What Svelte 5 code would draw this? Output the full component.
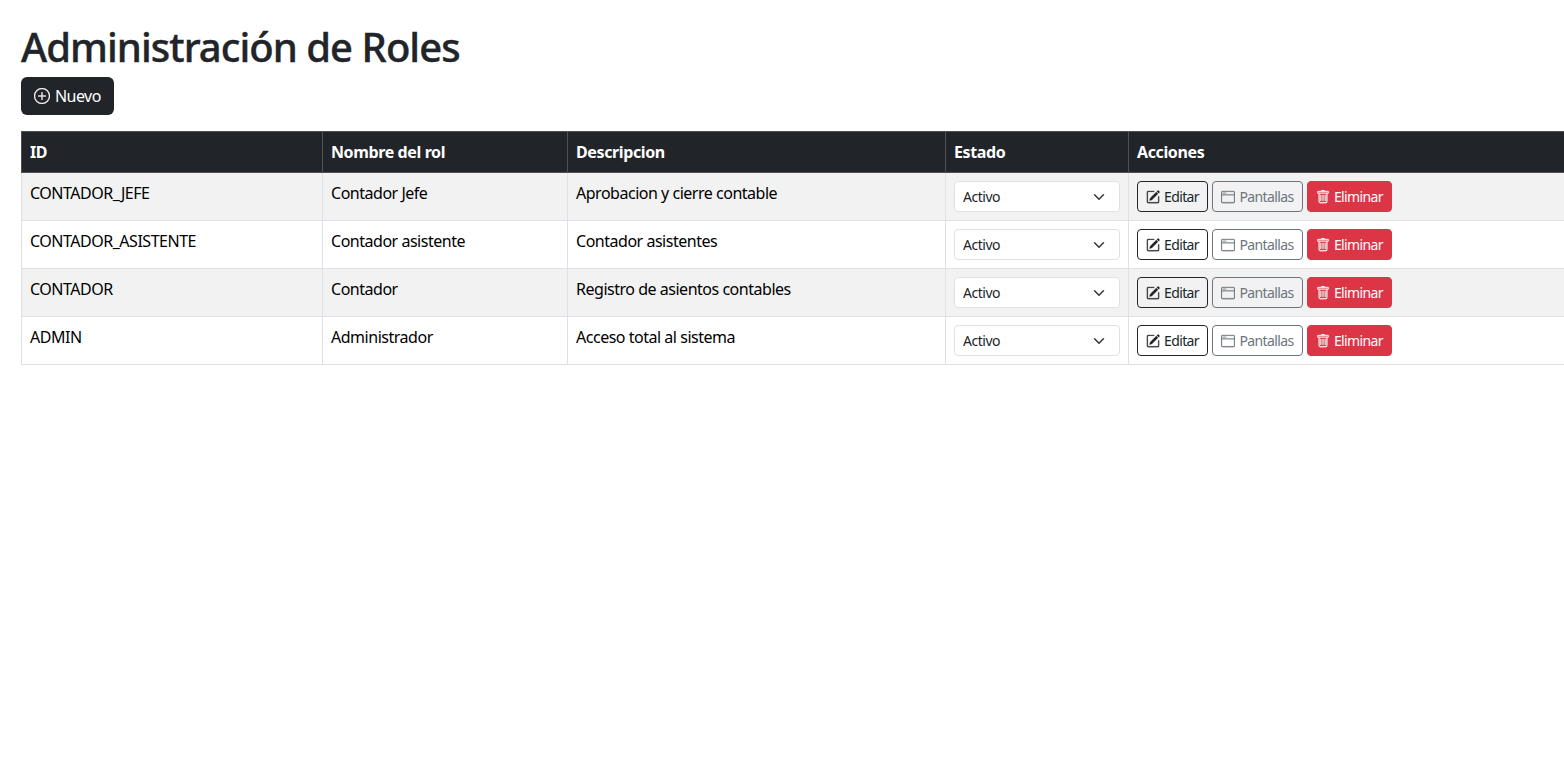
<script>
	const roles = [
		{ id: 'CONTADOR_JEFE', name: 'Contador Jefe', desc: 'Aprobacion y cierre contable' },
		{ id: 'CONTADOR_ASISTENTE', name: 'Contador asistente', desc: 'Contador asistentes' },
		{ id: 'CONTADOR', name: 'Contador', desc: 'Registro de asientos contables' },
		{ id: 'ADMIN', name: 'Administrador', desc: 'Acceso total al sistema' }
	];
</script>

<div class="page">
	<h1>Administración de Roles</h1>
	<button class="btn btn-new">
		<svg class="bi" width="16" height="16" viewBox="0 0 16 16" fill="currentColor">
			<path d="M8 15A7 7 0 1 1 8 1a7 7 0 0 1 0 14zm0 1A8 8 0 1 0 8 0a8 8 0 0 0 0 16z" />
			<path d="M8 4a.5.5 0 0 1 .5.5v3h3a.5.5 0 0 1 0 1h-3v3a.5.5 0 0 1-1 0v-3h-3a.5.5 0 0 1 0-1h3v-3A.5.5 0 0 1 8 4z" />
		</svg>
		Nuevo
	</button>

	<table>
		<colgroup>
			<col class="c1" />
			<col class="c2" />
			<col class="c3" />
			<col class="c4" />
			<col class="c5" />
		</colgroup>
		<thead>
			<tr>
				<th>ID</th>
				<th>Nombre del rol</th>
				<th>Descripcion</th>
				<th>Estado</th>
				<th>Acciones</th>
			</tr>
		</thead>
		<tbody>
			{#each roles as role}
				<tr>
					<td>{role.id}</td>
					<td>{role.name}</td>
					<td>{role.desc}</td>
					<td>
						<select>
							<option>Activo</option>
							<option>Inactivo</option>
						</select>
					</td>
					<td>
						<div class="actions">
							<button class="btn btn-sm btn-edit">
								<svg class="bi" width="14" height="14" viewBox="0 0 16 16" fill="currentColor">
									<path d="M15.502 1.94a.5.5 0 0 1 0 .706L14.459 3.69l-2-2L13.502.646a.5.5 0 0 1 .707 0l1.293 1.293zm-1.75 2.456-2-2L4.939 9.21a.5.5 0 0 0-.121.196l-.805 2.414a.25.25 0 0 0 .316.316l2.414-.805a.5.5 0 0 0 .196-.12l6.813-6.814z" />
									<path fill-rule="evenodd" d="M1 13.5A1.5 1.5 0 0 0 2.5 15h11a1.5 1.5 0 0 0 1.5-1.5v-6a.5.5 0 0 0-1 0v6a.5.5 0 0 1-.5.5h-11a.5.5 0 0 1-.5-.5v-11a.5.5 0 0 1 .5-.5H9a.5.5 0 0 0 0-1H2.5A1.5 1.5 0 0 0 1 2.5v11z" />
								</svg>
								Editar
							</button>
							<button class="btn btn-sm btn-screens">
								<svg class="bi" width="14" height="14" viewBox="0 0 16 16" fill="currentColor">
									<path d="M2.5 4a.5.5 0 1 0 0-1 .5.5 0 0 0 0 1zm2-.5a.5.5 0 1 1-1 0 .5.5 0 0 1 1 0zm1 .5a.5.5 0 1 0 0-1 .5.5 0 0 0 0 1z" />
									<path d="M2 1a2 2 0 0 0-2 2v10a2 2 0 0 0 2 2h12a2 2 0 0 0 2-2V3a2 2 0 0 0-2-2H2zm13 2v2H1V3a1 1 0 0 1 1-1h12a1 1 0 0 1 1 1zM2 14a1 1 0 0 1-1-1V6h14v7a1 1 0 0 1-1 1H2z" />
								</svg>
								Pantallas
							</button>
							<button class="btn btn-sm btn-delete">
								<svg class="bi" width="14" height="14" viewBox="0 0 16 16" fill="currentColor">
									<path d="M5.5 5.5A.5.5 0 0 1 6 6v6a.5.5 0 0 1-1 0V6a.5.5 0 0 1 .5-.5zm2.5 0a.5.5 0 0 1 .5.5v6a.5.5 0 0 1-1 0V6a.5.5 0 0 1 .5-.5zm3 .5a.5.5 0 0 0-1 0v6a.5.5 0 0 0 1 0V6z" />
									<path fill-rule="evenodd" d="M14.5 3a1 1 0 0 1-1 1H13v9a2 2 0 0 1-2 2H5a2 2 0 0 1-2-2V4h-.5a1 1 0 0 1-1-1V2a1 1 0 0 1 1-1H6a1 1 0 0 1 1-1h2a1 1 0 0 1 1 1h3.5a1 1 0 0 1 1 1v1zM4.118 4 4 4.059V13a1 1 0 0 0 1 1h6a1 1 0 0 0 1-1V4.059L11.882 4H4.118zM2.5 3V2h11v1h-11z" />
								</svg>
								Eliminar
							</button>
						</div>
					</td>
				</tr>
			{/each}
		</tbody>
	</table>
</div>

<style>
	:global(body) {
		margin: 0;
		background: #fff;
		color: #212529;
		font-family: "Noto Sans", "Open Sans", sans-serif;
		font-size: 16px;
		line-height: 1.5;
		letter-spacing: -0.024em;
		overflow-x: hidden;
	}

	.page {
		padding: 23px 0 0 21px;
	}

	h1 {
		margin: 0 0 6px;
		font-size: 40px;
		font-weight: 500;
		line-height: 48px;
		letter-spacing: -0.024em;
		-webkit-text-stroke: 0.4px #212529;
	}

	.bi {
		stroke: currentColor;
		stroke-width: 0.3;
	}

	.btn {
		display: inline-flex;
		align-items: center;
		gap: 4px;
		border: 1px solid transparent;
		border-radius: 6px;
		font: inherit;
		letter-spacing: inherit;
		cursor: pointer;
	}

	.btn-new {
		display: flex;
		height: 38px;
		padding: 0 12px;
		margin-bottom: 16px;
		background: #212529;
		color: #fff;
		gap: 5px;
		letter-spacing: -0.035em;
	}

	.btn-sm {
		height: 31px;
		padding: 0 8px;
		border-radius: 4px;
		font-size: 14px;
		letter-spacing: -0.044em;
		background: transparent;
	}

	.btn-edit {
		border-color: #212529;
		color: #212529;
	}

	.btn-screens {
		border-color: #6c757d;
		color: #6c757d;
	}

	.btn-delete {
		background: #dc3545;
		border-color: #dc3545;
		color: #fff;
	}

	.actions {
		display: flex;
		gap: 4.4px;
	}

	table {
		width: 1600px;
		table-layout: fixed;
		border-collapse: collapse;
		color: #000;
	}

	.c1 { width: 301px; }
	.c2 { width: 245px; }
	.c3 { width: 378px; }
	.c4 { width: 183px; }

	th, td {
		padding: 8px;
		border: 1px solid #dee2e6;
		text-align: left;
		vertical-align: top;
	}

	td {
		letter-spacing: -0.03em;
	}

	th {
		background: #212529;
		border-color: #4d5154;
		color: #fff;
		font-weight: 700;
	}

	tbody tr:nth-child(odd) td {
		background: #f2f2f2;
	}

	select {
		display: block;
		width: 100%;
		height: 31px;
		padding: 0 36px 0 8px;
		border: 1px solid #dee2e6;
		border-radius: 4px;
		appearance: none;
		background-color: #fff;
		background-image: url("data:image/svg+xml,%3csvg xmlns='http://www.w3.org/2000/svg' viewBox='0 0 16 16'%3e%3cpath fill='none' stroke='%23343a40' stroke-linecap='round' stroke-linejoin='round' stroke-width='2' d='m2 5 6 6 6-6'/%3e%3c/svg%3e");
		background-repeat: no-repeat;
		background-position: right 12px center;
		background-size: 16px 12px;
		color: #212529;
		font: inherit;
		font-size: 14px;
		letter-spacing: inherit;
	}
</style>
